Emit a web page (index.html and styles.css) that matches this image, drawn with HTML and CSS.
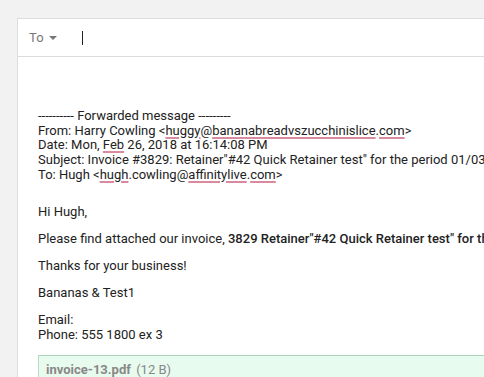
FILE: index.html
```html
<!DOCTYPE html>
<html lang="en">
<head>
    <meta charset="UTF-8">
    <title>Compose</title>
    <link rel="stylesheet" href="styles.css">
</head>
<body>
    <div class="compose">
        <div class="to-bar">
            <span class="to-label">To <span class="caret"></span></span>
            <span class="cursor"></span>
        </div>
        <div class="message">
            <div class="forward">
                <div>---------- Forwarded message ---------</div>
                <div>From: Harry Cowling &lt;<span class="spell">huggy</span>@<span class="spell">bananabreadvszucchinislice</span>.<span class="spell">com</span>&gt;</div>
                <div>Date: Mon, <span class="spell">Feb</span> 26, 2018 at 16:14:08 PM</div>
                <div>Subject: Invoice #3829: Retainer"#42 Quick Retainer test" for the period 01/03</div>
                <div>To: Hugh &lt;<span class="spell">hugh</span>.cowling@<span class="spell">affinitylive</span>.<span class="spell">com</span>&gt;</div>
            </div>
            <p>Hi Hugh,</p>
            <p>Please find attached our invoice, <b>3829 Retainer"#42 Quick Retainer test" for th</b></p>
            <p>Thanks for your business!</p>
            <p>Bananas &amp; Test1</p>
            <p>Email:<br>Phone: 555 1800 ex 3</p>
            <div class="attachment">
                <span class="file-name">invoice-13.pdf</span>
                <span class="file-size">(12 B)</span>
            </div>
        </div>
    </div>
</body>
</html>
```

FILE: styles.css
```css
/* Page */
body {
    margin: 0;
    background-color: #f2f2f2;
    font-family: Roboto, "Liberation Sans", sans-serif;
    font-size: 13px;
    color: #222;
    overflow: hidden;
    height: 377px;
}

/* Compose panel */
.compose {
    margin: 18px 0 0 17px;
    background-color: white;
    border-top: 1px solid #dedede;
    border-left: 1px solid #dedede;
    height: 400px;
}

/* To row */
.to-bar {
    display: flex;
    align-items: center;
    height: 37px;
    padding-left: 11px;
    border-bottom: 1px solid #dcdcdc;
}
.to-label {
    color: #777;
    font-size: 13px;
    display: flex;
    align-items: center;
    gap: 5px;
    width: 53px;
}
.caret {
    width: 0;
    height: 0;
    border-left: 4px solid transparent;
    border-right: 4px solid transparent;
    border-top: 4px solid #777;
}
.cursor {
    width: 1px;
    height: 14px;
    background-color: #222;
}

/* Message body */
.message {
    padding: 52px 0 0 20px;
    white-space: nowrap;
    line-height: 14.7px;
}
.forward {
    margin-bottom: 22px;
}
.message p {
    margin: 0 0 12.5px 0;
}
.message b {
    font-weight: 500;
}
.spell {
    text-decoration: underline;
    text-decoration-color: #d98a9e;
    text-decoration-thickness: 2px;
    text-underline-offset: 2px;
}

/* Attachment chip */
.attachment {
    margin-top: 10px;
    background-color: #e8fbef;
    border: 1px solid #b9dcc7;
    border-top-color: #a9d3ba;
    border-right: none;
    padding: 7px 0 10px 7px;
    color: #888;
}
.file-name {
    font-weight: bold;
    margin-right: 2px;
}
```
